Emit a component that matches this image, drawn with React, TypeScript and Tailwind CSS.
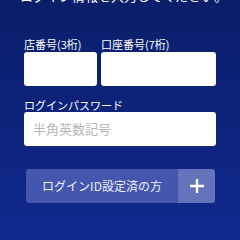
export default function App() {
  return (
    <div
      className="w-[240px] h-[240px] overflow-hidden bg-gradient-to-b from-[#0a1e6a] to-[#10298f] text-white"
      style={{ fontFamily: '"Noto Sans CJK JP", "Noto Sans", sans-serif' }}
    >
      <p className="mt-[-12px] pl-[20px] text-[13px] leading-[16px] whitespace-nowrap">
        ログイン情報を入力してください。
      </p>

      <div className="px-[24px] mt-[33px] flex gap-[4px]">
        <div className="w-[73px] flex flex-col">
          <label className="text-[11px] leading-[14px] h-[14px] whitespace-nowrap">店番号(3桁)</label>
          <div className="mt-[1px] h-[34px] bg-white rounded-[3px]"></div>
        </div>
        <div className="flex-1 flex flex-col">
          <label className="text-[11px] leading-[14px] h-[14px] whitespace-nowrap">口座番号(7桁)</label>
          <div className="mt-[1px] h-[34px] bg-white rounded-[3px]"></div>
        </div>
      </div>

      <div className="px-[24px] mt-[12px] flex flex-col">
        <label className="text-[11px] leading-[14px] h-[14px] whitespace-nowrap">ログインパスワード</label>
        <div className="mt-0 h-[34px] bg-white rounded-[3px] flex items-center pl-[9px]">
          <span className="text-[13px] text-[#b4b4b4]">半角英数記号</span>
        </div>
      </div>

      <div className="ml-[26px] mr-[25px] mt-[23px] h-[34px] flex rounded-[3px] overflow-hidden">
        <div className="flex-1 bg-[#4456ae] flex items-center justify-center text-[12px] text-[#eef0fa]">
          ログインID設定済の方
        </div>
        <div className="w-[37px] bg-[#6473bc] flex items-center justify-center">
          <svg width="14" height="14" viewBox="0 0 14 14">
            <path d="M7 0v14M0 7h14" stroke="white" strokeWidth="2.4" />
          </svg>
        </div>
      </div>
    </div>
  );
}
